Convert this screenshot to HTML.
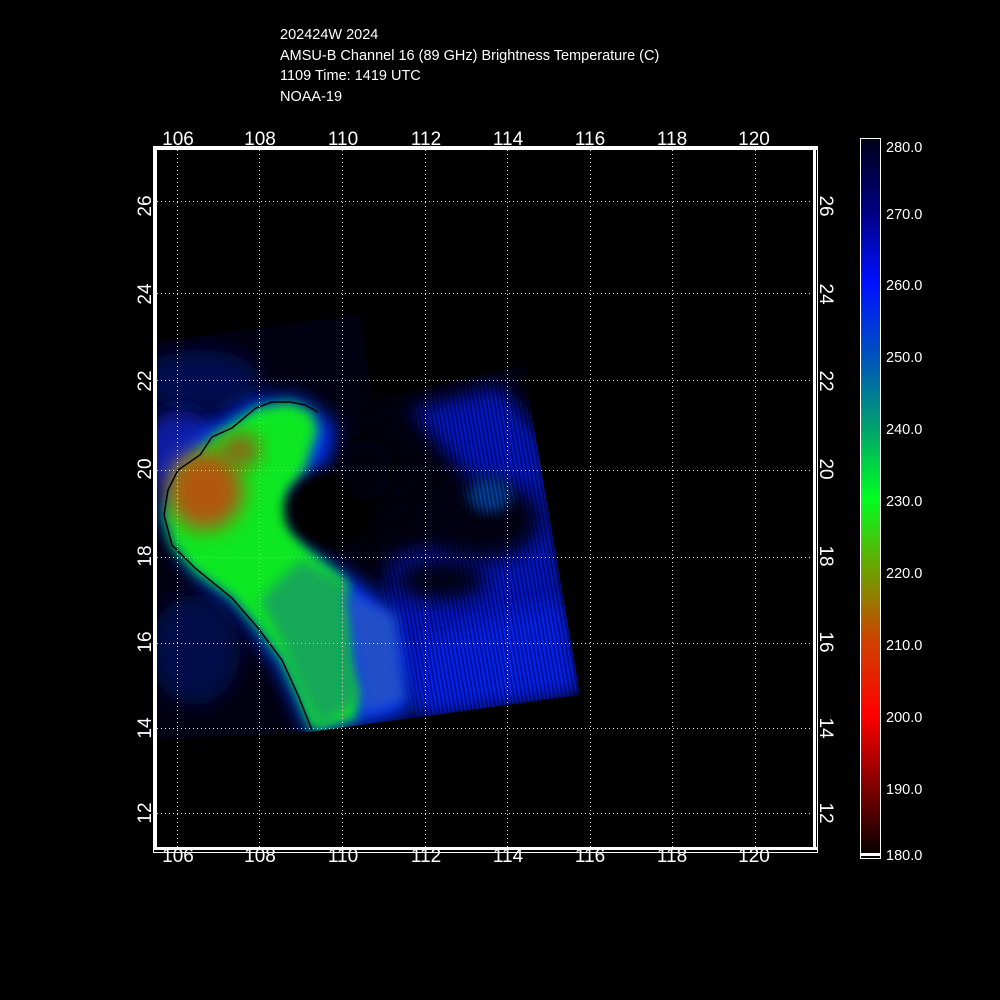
<!DOCTYPE html>
<html><head><style>
html,body{margin:0;padding:0;background:#000;}
svg{display:block}
</style></head><body>
<svg width="1000" height="1000" viewBox="0 0 1000 1000" xmlns="http://www.w3.org/2000/svg" font-family="Liberation Sans, sans-serif">
<defs>
<filter id="b6" x="-20%" y="-20%" width="140%" height="140%"><feGaussianBlur stdDeviation="6"/></filter>
<filter id="b10" x="-30%" y="-30%" width="160%" height="160%"><feGaussianBlur stdDeviation="10"/></filter>
<filter id="b3"><feGaussianBlur stdDeviation="3"/></filter>
<clipPath id="sw"><polygon points="157,342 360,314 372,400 523,365 580,695 310,732 255,735 157,740"/></clipPath>
<linearGradient id="cb" x1="0" y1="0" x2="0" y2="1">
<stop offset="0" stop-color="#000018"/>
<stop offset="0.1" stop-color="#000080"/>
<stop offset="0.2" stop-color="#0010ff"/>
<stop offset="0.3" stop-color="#0050c0"/>
<stop offset="0.4" stop-color="#00a070"/>
<stop offset="0.5" stop-color="#00ff20"/>
<stop offset="0.6" stop-color="#70a000"/>
<stop offset="0.7" stop-color="#d04000"/>
<stop offset="0.8" stop-color="#ff0000"/>
<stop offset="0.9" stop-color="#800000"/>
<stop offset="1" stop-color="#000000"/>
</linearGradient>
<pattern id="stripes" width="4" height="10" patternUnits="userSpaceOnUse" patternTransform="rotate(-10)"><rect width="2" height="10" fill="#000" opacity="0.45"/></pattern>
</defs>
<rect width="1000" height="1000" fill="#000"/>
<text fill="#fff" font-size="14.5">
<tspan x="280" y="39">202424W 2024</tspan>
<tspan x="280" y="60">AMSU-B Channel 16 (89 GHz) Brightness Temperature (C)</tspan>
<tspan x="280" y="80">1109 Time: 1419 UTC</tspan>
<tspan x="280" y="101">NOAA-19</tspan>
</text>

<g clip-path="url(#sw)">
 <polygon points="157,342 360,314 372,400 523,365 580,695 310,732 255,735 157,740" fill="#000010"/>
 <ellipse cx="200" cy="380" rx="60" ry="30" fill="#000a50" filter="url(#b10)"/>
 <ellipse cx="180" cy="450" rx="40" ry="40" fill="#0a1aa0" filter="url(#b10)"/>
 <ellipse cx="195" cy="650" rx="45" ry="55" fill="#000c48" filter="url(#b10)"/>
 <polygon points="410,410 500,385 545,440 580,690 420,715 380,650 390,560 450,540 470,480" fill="#0018d0" filter="url(#b10)"/>
 <polygon points="420,640 560,600 580,690 420,715" fill="#0020ff" filter="url(#b10)"/>
 <ellipse cx="480" cy="520" rx="60" ry="40" fill="#000018" filter="url(#b10)"/>
 <ellipse cx="490" cy="495" rx="22" ry="18" fill="#0040a0" filter="url(#b6)"/>
 <ellipse cx="440" cy="580" rx="45" ry="20" fill="#000018" filter="url(#b10)"/>
 <rect x="360" y="370" width="230" height="370" fill="url(#stripes)"/>
 <polygon points="160,515 170,465 210,425 255,398 300,398 335,425 330,460 300,480 290,520 320,560 355,580 380,600 400,650 410,715 310,735 280,670 240,610 190,570" fill="#0030ff" filter="url(#b10)"/>
 <polygon points="164,515 176,472 212,437 256,408 290,402 312,412 318,430 305,470 288,495 290,525 315,555 345,580 350,620 345,660 362,690 355,720 312,730 298,695 282,660 258,628 232,598 195,572 172,545" fill="#10e820" filter="url(#b6)"/>
 <polygon points="260,600 300,560 345,582 355,640 360,700 320,728 300,690 280,640" fill="#14a858" filter="url(#b6)"/>
 <polygon points="345,590 395,615 405,700 365,715" fill="#2050c8" filter="url(#b6)"/>
 <ellipse cx="205" cy="490" rx="38" ry="40" fill="#b05810" filter="url(#b10)"/>
 <ellipse cx="240" cy="450" rx="20" ry="16" fill="#906010" filter="url(#b10)"/>
 <ellipse cx="330" cy="510" rx="45" ry="38" fill="#000" filter="url(#b6)"/>
 <ellipse cx="365" cy="470" rx="25" ry="30" fill="#000010" filter="url(#b6)"/>
 <polyline points="164,515 168,490 178,470 200,455 212,437 232,428 256,408 272,402 290,402 305,405 318,412" fill="none" stroke="#000" stroke-width="1.5"/>
 <polyline points="164,515 172,545 195,568 232,598 258,628 282,660 298,695 312,730" fill="none" stroke="#000" stroke-width="1.5"/>
</g>

<g stroke="#fff" stroke-width="1" stroke-dasharray="1,3" opacity="0.9">
<line x1="177.5" y1="150" x2="177.5" y2="850"/><line x1="259.5" y1="150" x2="259.5" y2="850"/><line x1="342.5" y1="150" x2="342.5" y2="850"/><line x1="425.5" y1="150" x2="425.5" y2="850"/><line x1="507.5" y1="150" x2="507.5" y2="850"/><line x1="590.5" y1="150" x2="590.5" y2="850"/><line x1="672.5" y1="150" x2="672.5" y2="850"/><line x1="755.5" y1="150" x2="755.5" y2="850"/>
<line x1="157" y1="201.5" x2="815" y2="201.5"/><line x1="157" y1="293.5" x2="815" y2="293.5"/><line x1="157" y1="380.5" x2="815" y2="380.5"/><line x1="157" y1="470.5" x2="815" y2="470.5"/><line x1="157" y1="557.5" x2="815" y2="557.5"/><line x1="157" y1="643.5" x2="815" y2="643.5"/><line x1="157" y1="728.5" x2="815" y2="728.5"/><line x1="157" y1="813.5" x2="815" y2="813.5"/>
</g>
<rect x="153.5" y="146.5" width="664" height="706" fill="none" stroke="#fff" stroke-width="1"/>
<rect x="156.5" y="149.5" width="658" height="700" fill="none" stroke="#fff" stroke-width="1"/>
<rect x="154" y="147" width="663" height="3" fill="#fff"/>
<rect x="154" y="847" width="663" height="3" fill="#fff"/>
<rect x="154" y="147" width="3" height="703" fill="#fff"/>
<rect x="813" y="147" width="3" height="703" fill="#fff"/>

<g fill="#fff" font-size="19" text-anchor="middle">
<text x="178" y="145">106</text><text x="260" y="145">108</text><text x="343" y="145">110</text><text x="426" y="145">112</text><text x="508" y="145">114</text><text x="590" y="145">116</text><text x="672" y="145">118</text><text x="754" y="145">120</text>
<text x="178" y="862">106</text><text x="260" y="862">108</text><text x="343" y="862">110</text><text x="426" y="862">112</text><text x="508" y="862">114</text><text x="590" y="862">116</text><text x="672" y="862">118</text><text x="754" y="862">120</text>
</g>
<g fill="#fff" font-size="19" text-anchor="middle">
<text transform="translate(151,206) rotate(-90)">26</text>
<text transform="translate(151,294) rotate(-90)">24</text>
<text transform="translate(151,381) rotate(-90)">22</text>
<text transform="translate(151,469) rotate(-90)">20</text>
<text transform="translate(151,556) rotate(-90)">18</text>
<text transform="translate(151,642) rotate(-90)">16</text>
<text transform="translate(151,728) rotate(-90)">14</text>
<text transform="translate(151,813) rotate(-90)">12</text>
<text transform="translate(820,206) rotate(90)">26</text>
<text transform="translate(820,294) rotate(90)">24</text>
<text transform="translate(820,381) rotate(90)">22</text>
<text transform="translate(820,469) rotate(90)">20</text>
<text transform="translate(820,556) rotate(90)">18</text>
<text transform="translate(820,642) rotate(90)">16</text>
<text transform="translate(820,728) rotate(90)">14</text>
<text transform="translate(820,813) rotate(90)">12</text>
</g>

<rect x="860.5" y="138.5" width="20" height="720" fill="url(#cb)" stroke="#fff" stroke-width="1"/>
<rect x="861" y="853" width="19" height="3" fill="#fff"/>
<g fill="#fff" font-size="14.5">
<text x="886" y="152">280.0</text><text x="886" y="219">270.0</text><text x="886" y="290">260.0</text><text x="886" y="362">250.0</text><text x="886" y="434">240.0</text><text x="886" y="506">230.0</text><text x="886" y="578">220.0</text><text x="886" y="650">210.0</text><text x="886" y="722">200.0</text><text x="886" y="794">190.0</text><text x="886" y="860">180.0</text>
</g>
</svg>
</body></html>
